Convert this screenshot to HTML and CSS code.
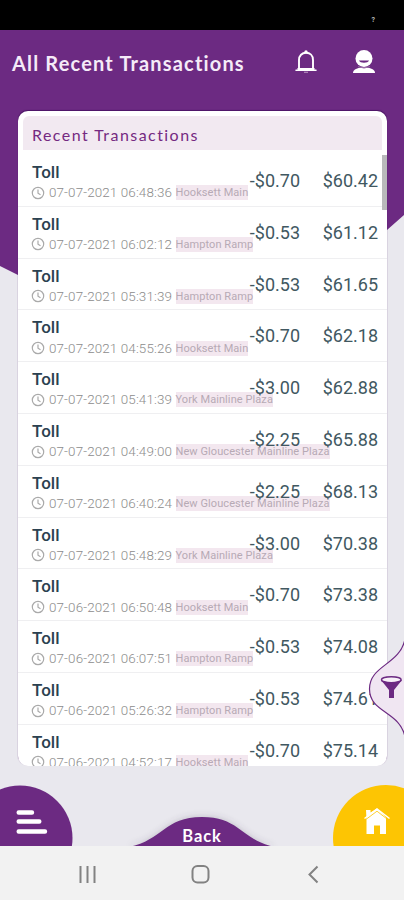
FILE: index.html
```
<!DOCTYPE html>
<html lang="en">
<head>
<meta charset="utf-8">
<title>All Recent Transactions</title>
<link rel="stylesheet" href="styles.css">
</head>
<body>
<div class="phone">
  <div class="status"><span class="status-mark">?</span></div>
  <main class="app">
    <svg class="backdrop" viewBox="0 0 404 250" aria-hidden="true"><path d="M0 0H404V185L387 200L202 338L18 245L0 236Z" fill="#6c2a82"/></svg>
    <header class="header">
      <h1 class="title">All Recent Transactions</h1>
      <svg class="bell" viewBox="0 0 24 26"><path d="M5 20.5V11C5 6.500 8 3.800 12 3.800S19 6.500 19 11V20.500" fill="none" stroke="#fff" stroke-width="1.900"/><path d="M2 21.200H22M4 19.700H20" stroke="#fff" stroke-width="1.500" stroke-linecap="round"/><circle cx="12" cy="2.900" r="1.700" fill="#fff"/><path d="M10 23.300H14" stroke="#b28abd" stroke-width="1.200"/></svg>
      <svg class="user" viewBox="0 0 24 26"><path d="M1 24C1 21 4 19.300 8 18.700H16C20 19.300 23 21 23 24Z" fill="#fff"/><circle cx="12" cy="9.500" r="8.500" fill="#fff"/><path d="M7 11.500H17C16 14.500 8 14.500 7 11.500Z" fill="#6c2a82"/><path d="M6 17.600Q12 20.500 18 17.600" stroke="#9d70aa" fill="none"/></svg>
    </header>
    <section class="card">
      <h2 class="card-title">Recent Transactions</h2>
      <div class="list" id="list"></div>
    </section>
    <div class="scrollbar"></div>
    <svg class="filter" viewBox="0 0 40 100"><path d="M41 0C36 26 5.500 26 5.500 50C5.500 74 36 72 41 98Z" fill="#f0e6f2" stroke="#6c2a82" stroke-width="1.200"/><path d="M17 41L25 51V59H30V51L38 41Z" fill="#6c2a82"/><ellipse cx="27.300" cy="40.700" rx="9.800" ry="3" fill="#f7f0f8" stroke="#6c2a82" stroke-width="1.500"/></svg>
    <div class="dock">
      <svg class="dock-shapes" viewBox="0 0 404 70" aria-hidden="true">
        <defs><filter id="soft" x="-20%" y="-30%" width="140%" height="160%"><feDropShadow dx="0" dy="-1" stdDeviation="3" flood-color="#50405a" flood-opacity=".22"/></filter></defs>
        <circle cx="20" cy="62" r="52.500" fill="#6c2a82"/>
        <path d="M18.700 36.500H32M18.700 45.500H39.300M18.700 55.500H45" stroke="#fff" stroke-width="4.400" stroke-linecap="round"/>
        <circle cx="386" cy="62" r="53" fill="#fdc503"/>
        <path d="M129 71C163 64 164 41 202 41S241 64 275 71Z" fill="#6c2a82" filter="url(#soft)"/>
        <path d="M366 34H370.500V36.500L377 32.500L386 41.500V58H380V49.500H374V58H366.500V43Z" fill="#fff"/>
        <path d="M364.500 42.500L377 33L389.500 42.500" fill="none" stroke="#fff" stroke-width="1.500"/>
        <path d="M366.500 43L377 35.200L387 43" fill="none" stroke="#fdc503" stroke-width=".8"/>
      </svg>
      <span class="back">Back</span>
    </div>
  </main>
  <nav class="system-nav">
    <svg viewBox="0 0 404 54"><g fill="none" stroke="#828282" stroke-width="2"><path d="M80.500 20V37M87.500 20V37M94.500 20V37"/><rect x="192.500" y="20" width="16" height="16.500" rx="5"/><path d="M317.500 20.500L309.500 28.500L317.500 36.500"/></g></svg>
  </nav>
</div>
<script src="list.js"></script>
</body>
</html>
```
FILE: list.js
```
const transactions = [
  ["07-07-2021 06:48:36", "Hooksett Main", "-$0.70", "$60.42"],
  ["07-07-2021 06:02:12", "Hampton Ramp", "-$0.53", "$61.12"],
  ["07-07-2021 05:31:39", "Hampton Ramp", "-$0.53", "$61.65"],
  ["07-07-2021 04:55:26", "Hooksett Main", "-$0.70", "$62.18"],
  ["07-07-2021 05:41:39", "York Mainline Plaza", "-$3.00", "$62.88"],
  ["07-07-2021 04:49:00", "New Gloucester Mainline Plaza", "-$2.25", "$65.88"],
  ["07-07-2021 06:40:24", "New Gloucester Mainline Plaza", "-$2.25", "$68.13"],
  ["07-07-2021 05:48:29", "York Mainline Plaza", "-$3.00", "$70.38"],
  ["07-06-2021 06:50:48", "Hooksett Main", "-$0.70", "$73.38"],
  ["07-06-2021 06:07:51", "Hampton Ramp", "-$0.53", "$74.08"],
  ["07-06-2021 05:26:32", "Hampton Ramp", "-$0.53", "$74.61"],
  ["07-06-2021 04:52:17", "Hooksett Main", "-$0.70", "$75.14"]
];
document.getElementById("list").innerHTML = transactions.map(([date, place, amount, balance]) => `
  <article class="row">
    <div class="info">
      <div class="name">Toll</div>
      <div class="meta">
        <svg class="clock" viewBox="0 0 14 14"><circle cx="7" cy="7" r="5.700"/><path d="M7 3.500V7.200L9.500 8.800"/></svg>
        <span class="date">${date}</span><span class="place">${place}</span>
      </div>
    </div>
    <div class="amount">${amount}</div>
    <div class="balance">${balance}</div>
  </article>`).join("");
```
FILE: styles.css
```
* { box-sizing: border-box; }
body { margin: 0; font-family: Roboto, "Liberation Sans", sans-serif; }
.phone { width: 404px; height: 900px; overflow: hidden; display: flex; flex-direction: column; }
.status { height: 30px; background: #000; display: flex; justify-content: flex-end; padding: 15px 29px 0 0; }
.status-mark { color: #bbb; font-size: 7px; line-height: 10px; font-weight: 700; }
.app { position: relative; height: 816px; background: #e9e8ee; overflow: hidden; }
.backdrop { position: absolute; left: 0; top: 0; width: 404px; height: 250px; }
.header { position: relative; height: 81px; display: flex; align-items: flex-start; padding: 19px 0 0 12px; color: #fff; }
.title { margin: 0; width: 282px; font-family: Lato, sans-serif; font-size: 20px; font-weight: 700; line-height: 28px; letter-spacing: 1.17px; white-space: nowrap; color: #f5ebf8; }
.bell { width: 24px; height: 26px; flex: none; }
.user { width: 24px; height: 26px; margin-left: 34px; flex: none; }
.card { position: relative; width: 369px; height: 655px; margin-left: 18px; padding: 5px 5px 0; background: #fff; border-radius: 10px; overflow: hidden; box-shadow: 0 -1px 1px -.5px #4d1566; }
.card-title { margin: 0; height: 34px; padding-left: 9px; border-radius: 6px 6px 0 0; background: #f2e9f1; color: #752981; font-family: Lato, sans-serif; font-size: 16px; font-weight: 400; line-height: 37px; letter-spacing: 1.45px; }
.list { margin: 5px -5px 0; }
.row { display: flex; height: 51.8px; padding: 7px 9px 0 14px; border-bottom: 1px solid #efeff1; white-space: nowrap; }
.info { width: 205px; flex: none; }
.name { font-size: 17px; font-weight: 500; line-height: 20px; color: #2b4150; }
.meta { display: flex; align-items: center; height: 20px; margin-top: .7px; color: #aaa; }
.clock { width: 14px; height: 14px; margin: 0 4px 0 -1px; flex: none; fill: none; stroke: #aaa; stroke-width: 1.200; }
.date { width: 126.500px; flex: none; font-size: 13.400px; font-weight: 300; letter-spacing: .13px; color: #8c8c8c; }
.place { flex: none; height: 15px; font-size: 11px; line-height: 15px; letter-spacing: .08px; background: #f3e7ef; color: #b7aab5; }
.amount, .balance { position: relative; text-align: right; font-size: 18px; line-height: 22px; padding-top: 8px; color: #415861; }
.amount { width: 63px; }
.balance { width: 78px; }
.scrollbar { position: absolute; left: 382px; top: 125px; width: 5px; height: 55px; background: #b9b9bb; }
.filter { position: absolute; right: 0; top: 609px; width: 40px; height: 100px; }
.dock { position: absolute; left: 0; bottom: 0; width: 404px; height: 70px; }
.dock-shapes { position: absolute; left: 0; top: 0; width: 404px; height: 70px; }
.back { position: absolute; left: 0; width: 404px; top: 49px; text-align: center; color: #fff; font: 700 16.500px/22px Lato, sans-serif; letter-spacing: .9px; }
.system-nav { height: 54px; background: #f2f2f2; }
.system-nav svg { display: block; width: 404px; height: 54px; }
```
